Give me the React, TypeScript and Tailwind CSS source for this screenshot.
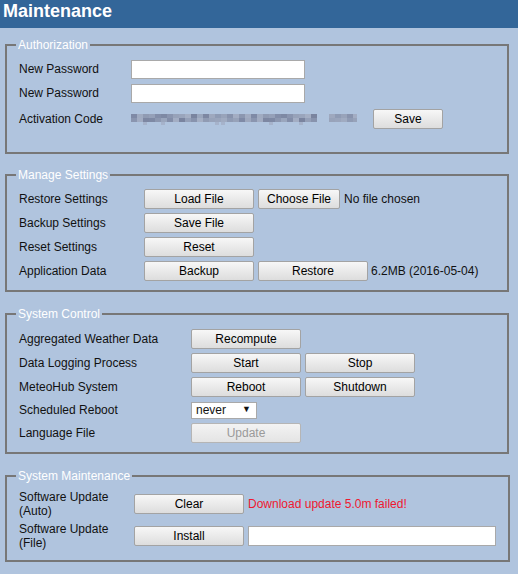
import React from 'react';

const btnBase =
  'h-[20px] border rounded-[2px] bg-gradient-to-b text-[12px] leading-none flex items-center justify-center';
const btnOn = 'border-[#a3a3a3] from-[#f7f7f7] to-[#dddddd] text-black';
const btnOff = 'border-[#b5b5b5] from-[#f3f3f3] to-[#e4e4e4] text-[#9a9a9a]';

const Button: React.FC<{ label: string; w: string; disabled?: boolean }> = ({ label, w, disabled }) => (
  <button className={`${btnBase} ${disabled ? btnOff : btnOn} ${w}`}>{label}</button>
);

const Section: React.FC<{ title: string; className: string; children: React.ReactNode }> = ({ title, className, children }) => (
  <fieldset className={`ml-[5px] w-[504px] border-2 border-[#777777] px-[12px] ${className}`}>
    <legend className="-ml-[3px] px-[2px] text-[12px] leading-[14px] text-white">{title}</legend>
    {children}
  </fieldset>
);

// pixelated blur of the activation code
const blurCols = [
  '#9aa6bd', '#8f9bb4', '#a3adc3', '#7f8aa6', '#95a0b8', '#8a95af', '#a5afc4', '#7d87a2', '#98a3ba', '#8c97b0',
  '#a0abc1', '#838ea9', '#97a2b9', '#7a849f', '#9ea8be', '#8893ad', '#a2acc2', '#909bb3', '#7e89a4', '#9aa5bc',
];
const BlurCode: React.FC = () => {
  const cells = [];
  for (let i = 0; i < 38; i++) {
    const c = blurCols[(i * 7 + 3) % blurCols.length];
    const c2 = blurCols[(i * 11 + 5) % blurCols.length];
    if (i === 31 || i === 32) continue;
    cells.push(<rect key={`a${i}`} x={i * 6} y={2} width={6} height={4} fill={c} />);
    cells.push(<rect key={`b${i}`} x={i * 6} y={6} width={6} height={4} fill={c2} />);
    if (i % 9 === 5 || i % 13 === 2) cells.push(<rect key={`c${i}`} x={i * 6} y={10} width={4} height={3} fill="#a6b3cb" />);
  }
  return (
    <svg width="226" height="14" viewBox="0 0 226 14" className="block">
      {cells}
    </svg>
  );
};

const Row: React.FC<{ label: React.ReactNode; lw: string; h: string; children?: React.ReactNode }> = ({ label, lw, h, children }) => (
  <div className={`flex items-center ${h}`}>
    <div className={`${lw} shrink-0 text-[12px] leading-[14px] text-[#111]`}>{label}</div>
    {children}
  </div>
);

export default function App() {
  return (
    <div className="w-[518px] min-h-[574px] bg-[#b0c4de] font-['Liberation_Sans',Arial,sans-serif] pb-[12px]">
      <div className="h-[28px] bg-[#336699] pl-[3px] text-[18px] font-bold leading-[23px] text-white">Maintenance</div>

      <Section title="Authorization" className="mt-[10px] pt-[5px] pb-[19px]">
        <Row label="New Password" lw="w-[112px]" h="h-[24px]">
          <input className="h-[19px] w-[174px] border border-[#a9a9a9] bg-white" />
        </Row>
        <Row label="New Password" lw="w-[112px]" h="h-[24px]">
          <input className="h-[19px] w-[174px] border border-[#a9a9a9] bg-white" />
        </Row>
        <Row label="Activation Code" lw="w-[112px]" h="h-[28px]">
          <BlurCode />
          <div className="ml-[16px]">
            <Button label="Save" w="w-[70px]" />
          </div>
        </Row>
      </Section>

      <Section title="Manage Settings" className="mt-[14px] pt-[5px] pb-[7px]">
        <Row label="Restore Settings" lw="w-[125px]" h="h-[24px]">
          <Button label="Load File" w="w-[110px]" />
          <div className="ml-[4px]">
            <Button label="Choose File" w="w-[82px]" />
          </div>
          <span className="ml-[4px] text-[12px] text-[#111]">No file chosen</span>
        </Row>
        <Row label="Backup Settings" lw="w-[125px]" h="h-[24px]">
          <Button label="Save File" w="w-[110px]" />
        </Row>
        <Row label="Reset Settings" lw="w-[125px]" h="h-[24px]">
          <Button label="Reset" w="w-[110px]" />
        </Row>
        <Row label="Application Data" lw="w-[125px]" h="h-[24px]">
          <Button label="Backup" w="w-[110px]" />
          <div className="ml-[4px]">
            <Button label="Restore" w="w-[110px]" />
          </div>
          <span className="ml-[3px] text-[12px] text-[#111]">6.2MB (2016-05-04)</span>
        </Row>
      </Section>

      <Section title="System Control" className="mt-[15px] pt-[6px] pb-[7px]">
        <Row label="Aggregated Weather Data" lw="w-[172px]" h="h-[24px]">
          <Button label="Recompute" w="w-[110px]" />
        </Row>
        <Row label="Data Logging Process" lw="w-[172px]" h="h-[24px]">
          <Button label="Start" w="w-[110px]" />
          <div className="ml-[4px]">
            <Button label="Stop" w="w-[110px]" />
          </div>
        </Row>
        <Row label="MeteoHub System" lw="w-[172px]" h="h-[24px]">
          <Button label="Reboot" w="w-[110px]" />
          <div className="ml-[4px]">
            <Button label="Shutdown" w="w-[110px]" />
          </div>
        </Row>
        <Row label="Scheduled Reboot" lw="w-[172px]" h="h-[22px]">
          <div className="flex h-[17px] w-[66px] items-center justify-between border border-[#a9a9a9] bg-white pl-[4px] pr-[5px] text-[12px] text-[#111]">
            <span>never</span>
            <span className="text-[9px]">▼</span>
          </div>
        </Row>
        <Row label="Language File" lw="w-[172px]" h="h-[24px]">
          <Button label="Update" w="w-[110px]" disabled />
        </Row>
      </Section>

      <Section title="System Maintenance" className="mt-[15px] pt-[4px] pb-[8px]">
        <Row label={<>Software Update<br />(Auto)</>} lw="w-[115px]" h="h-[33px]">
          <Button label="Clear" w="w-[110px]" />
          <span className="ml-[4px] text-[12px] text-[#ee1830]">Download update 5.0m failed!</span>
        </Row>
        <Row label={<>Software Update<br />(File)</>} lw="w-[115px]" h="h-[32px]">
          <Button label="Install" w="w-[110px]" />
          <input className="ml-[4px] h-[20px] w-[248px] border border-[#a9a9a9] bg-white" />
        </Row>
      </Section>
    </div>
  );
}
